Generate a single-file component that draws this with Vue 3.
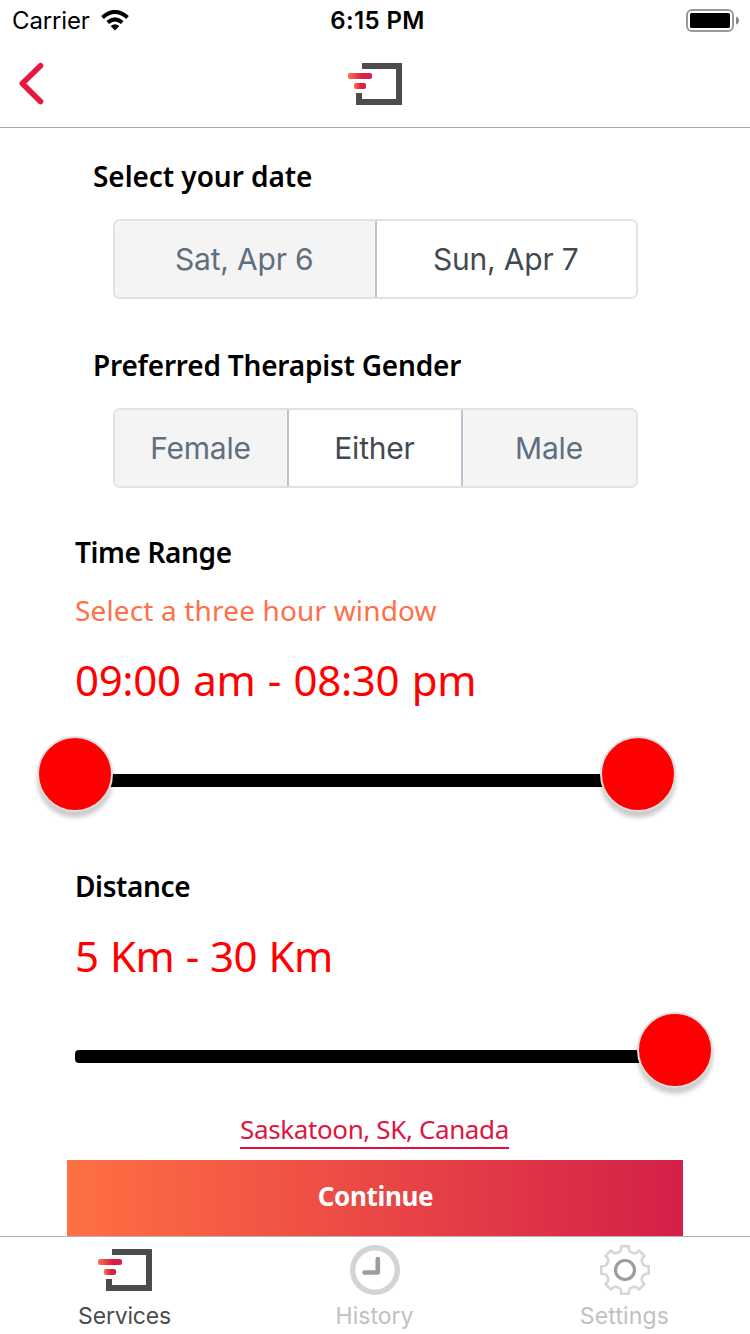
<script setup>
import { ref } from 'vue'

const days = ['Sat, Apr 6', 'Sun, Apr 7']
const genders = ['Female', 'Either', 'Male']
const day = ref('Sun, Apr 7')
const gender = ref('Either')

// Outline of the eight-toothed settings wheel
function gearOutline() {
  const profile = [[-0.28, 19], [-0.2, 20.5], [-0.16, 24], [0.16, 24], [0.2, 20.5], [0.28, 19]]
  const pts = []
  for (let i = 0; i < 8; i++) {
    const base = (i * Math.PI) / 4
    for (const [da, r] of profile) {
      pts.push(`${(25 + r * Math.sin(base + da)).toFixed(2)} ${(25 - r * Math.cos(base + da)).toFixed(2)}`)
    }
  }
  return `M${pts.join('L')}Z`
}
const gear = gearOutline()
</script>

<template>
  <div class="screen">
    <svg width="0" height="0" class="defs">
      <defs>
        <linearGradient id="warm" x1="0" x2="1" y1="0" y2="0">
          <stop offset="0" stop-color="#ff7048" />
          <stop offset="0.6" stop-color="#d81f4a" />
          <stop offset="1" stop-color="#d81f4a" />
        </linearGradient>
        <symbol id="logo" viewBox="0 0 55 43">
          <path d="M14 3H51V39H11V30" fill="none" stroke="#4c4c4c" stroke-width="6" />
          <rect x="0" y="10" width="24" height="6" rx="2" fill="url(#warm)" />
          <rect x="6" y="20" width="12" height="6" rx="2" fill="url(#warm)" />
        </symbol>
      </defs>
    </svg>

    <header class="status">
      <div class="carrier">
        <span class="carrier-name">Carrier</span>
        <svg width="28" height="21" viewBox="0 0 28 21">
          <path d="M1.500 7.500Q14-3.700 26.500 7.500M6.700 12.600Q14 6.300 21.300 12.600" fill="none" stroke="#000" stroke-width="4" />
          <path d="M14 20.500L9.700 16Q14 12.500 18.300 16Z" />
        </svg>
      </div>
      <span class="clock">6:15 PM</span>
      <svg class="battery" width="54" height="23" viewBox="0 0 54 23">
        <rect x="1" y="1" width="46" height="21" rx="5" fill="none" stroke="#999" stroke-width="2" />
        <rect x="4" y="4" width="40" height="15" rx="1.500" />
        <path d="M50 7.500Q53 8.500 53 11.500T50 15.500Z" fill="#888" />
      </svg>
    </header>

    <nav class="navbar">
      <svg class="back" width="28" height="44" viewBox="0 0 28 44">
        <path d="M23.500 4.700L5.300 22.500L23.500 40.500" fill="none" stroke="#e6183f" stroke-width="5.600" stroke-linecap="round" stroke-linejoin="round" />
      </svg>
      <svg class="logo" width="55" height="43"><use href="#logo" /></svg>
    </nav>

    <main class="content">
      <section class="choice">
        <h2 class="t-date">Select your date</h2>
        <div class="segments">
          <button v-for="d in days" :key="d" :class="{ on: d === day }" @click="day = d"><span>{{ d }}</span></button>
        </div>
      </section>
      <section class="choice second">
        <h2 class="t-gender">Preferred Therapist Gender</h2>
        <div class="segments">
          <button v-for="g in genders" :key="g" :class="{ on: g === gender }" @click="gender = g"><span>{{ g }}</span></button>
        </div>
      </section>

      <section class="range time">
        <h2 class="t-time">Time Range</h2>
        <p class="hint">Select a three hour window</p>
        <p class="value v-time">09:00 am - 08:30 pm</p>
        <div class="slider double">
          <div class="track"></div>
          <i class="knob start"></i><i class="knob end"></i>
        </div>
      </section>
      <section class="range distance">
        <h2 class="t-distance">Distance</h2>
        <p class="value v-distance">5 Km - 30 Km</p>
        <div class="slider">
          <div class="track"></div>
          <i class="knob end"></i>
        </div>
      </section>

      <div class="place"><a>Saskatoon, SK, Canada</a></div>
      <button class="continue"><span>Continue</span></button>
    </main>

    <footer class="tabs">
      <div class="tab active">
        <svg class="tab-logo" width="56" height="50" viewBox="0 0 56 50"><use href="#logo" x="0" y="4" width="55" height="43" /></svg>
        <span>Services</span>
      </div>
      <div class="tab history">
        <svg width="50" height="50" viewBox="0 0 50 50" fill="none">
          <circle cx="25" cy="25" r="22.300" stroke="#d4d4d4" stroke-width="5.400" />
          <path d="M27.800 14V27.500H14.500" stroke="#9d9d9d" stroke-width="4.600" stroke-linecap="round" stroke-linejoin="round" />
        </svg>
        <span>History</span>
      </div>
      <div class="tab settings">
        <svg width="50" height="50" viewBox="0 0 50 50" fill="none">
          <path :d="gear" stroke="#d6d6d6" stroke-width="2.600" stroke-linejoin="round" />
          <circle cx="25" cy="25" r="9.500" stroke="#9d9d9d" stroke-width="3.200" />
        </svg>
        <span>Settings</span>
      </div>
    </footer>
  </div>
</template>

<style>
html, body { margin: 0; background: #fff; }
</style>

<style scoped>
.screen {
  width: 750px; height: 1334px; overflow: hidden; background: #fff; color: #000;
  display: flex; flex-direction: column;
  font-family: "Noto Sans", "Open Sans", sans-serif;
}
.screen * { box-sizing: border-box; }
.defs { position: absolute; }
svg { display: block; flex: none; }
h2, p { margin: 0; white-space: nowrap; }
button { border: 0; padding: 0; font: inherit; }

.status {
  height: 40px; padding: 0 11px 0 12px; display: grid; grid-template-columns: 1fr auto 1fr;
  font-family: Inter, sans-serif; font-size: 24px; line-height: 42px;
}
.carrier { display: flex; gap: 12px; }
.carrier-name { width: 77px; white-space: nowrap; letter-spacing: -0.15px; }
.carrier svg { margin-top: 10px; }
.clock { font-weight: 600; letter-spacing: 0.4px; padding-left: 4px; }
.battery { justify-self: end; margin-top: 9px; margin-right: -1px; }

.navbar { height: 88px; border-bottom: 1px solid #a9a9a9; display: flex; align-items: flex-start; padding-left: 17px; }
.back { margin-top: 21px; }
.logo { margin: 23px 0 0 303px; }

.content { height: 1108px; display: flex; flex-direction: column; }
.choice { padding: 28px 112px 0 93px; }
.choice.second { padding-top: 46px; }
h2 { font-size: 28px; font-weight: 600; line-height: 40px; }
.t-date { letter-spacing: -0.06px; }
.t-gender { letter-spacing: -0.21px; }
.t-time, .t-distance { letter-spacing: -0.38px; }
.segments {
  margin: 23px 0 0 20px; height: 80px; display: flex; border: 2px solid #e2e2e2;
  border-radius: 7px; overflow: hidden;
}
.segments button {
  flex: 1; background: #f4f4f5; color: #616e7c; white-space: nowrap;
  font: 400 30px/76px Inter, sans-serif; letter-spacing: -0.2px;
}
.segments button span { margin-right: 1px; }
.segments button + button { border-left: 2px solid #b9c4cf; }
.segments button:nth-child(3) { flex: 0 0 175px; }
.segments .on { background: #fff; color: #434a4f; }

.range { padding: 0 75px; }
.time { padding-top: 44px; }
.hint { margin-top: 17px; font-size: 28px; line-height: 42px; color: #ff7048; letter-spacing: 0.15px; }
.value { font-size: 42px; line-height: 60px; color: #f00; }
.v-time { margin-top: 19px; letter-spacing: -0.35px; word-spacing: 2px; }
.slider { position: relative; height: 76px; padding-top: 38px; }
.time .slider { margin-top: 26px; }
.distance .slider { margin-top: 26px; }
.track { height: 13px; border-radius: 4px; background: #000; }
.double .track { margin-right: 37px; }
.knob {
  position: absolute; top: 0; width: 76px; height: 76px; border-radius: 50%;
  background: #f00; border: 2px solid #dedede; box-shadow: 0 6px 4px rgba(0, 0, 0, 0.2);
}
.knob.start { left: -38px; }
.knob.end { right: -38px; }
.double .knob.end { right: -1px; }
.distance { padding-top: 54px; }
.v-distance { margin-top: 20px; letter-spacing: -0.5px; word-spacing: 1px; }

.place { height: 72px; margin: auto 1px 0 0; display: flex; justify-content: center; align-items: flex-end; padding-bottom: 11px; }
.place a {
  height: 38px; border-bottom: 2px solid #e0143f; color: #e0143f;
  font-size: 26px; line-height: 36px; white-space: nowrap; letter-spacing: -0.38px;
}
.continue {
  height: 76px; margin: 0 67px; flex: none; display: flex; justify-content: center;
  color: #fff; font-size: 26px; font-weight: 700; line-height: 72px; letter-spacing: -0.35px;
  padding-left: 1px;
  background: linear-gradient(90deg, #ff7043, #d41f48);
}

.tabs {
  height: 98px; border-top: 1px solid #b2b2b2; display: grid; grid-template-columns: repeat(3, 250px);
  font: 400 23px/30px Inter, sans-serif; color: #c1c1c1;
}
.tab { display: flex; flex-direction: column; align-items: center; padding-top: 8px; }
.tab-logo { margin-right: -2px; }
.tab span { margin: 6px 1px 0 0; }
.active { color: #4c4c4c; }
.active span { letter-spacing: -0.2px; }
.settings span { letter-spacing: 0.15px; }
</style>
